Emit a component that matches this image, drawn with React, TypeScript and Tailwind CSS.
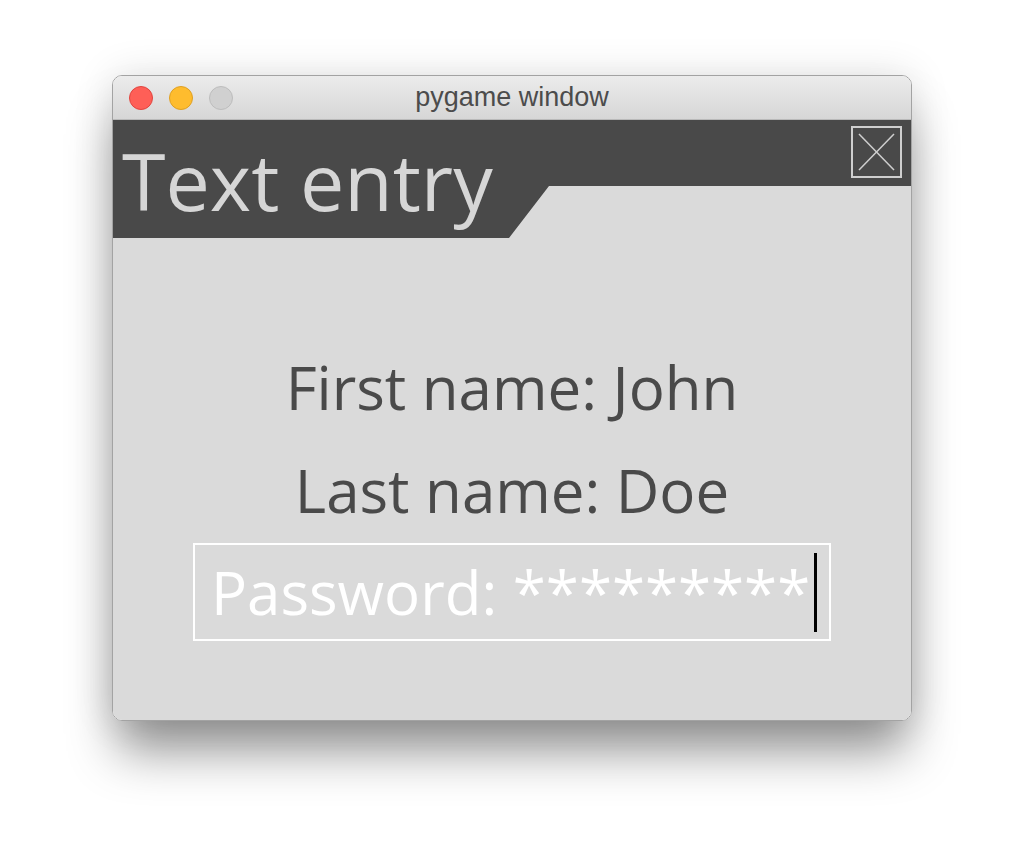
import React from "react";

const openSans = { fontFamily: '"Open Sans", "Noto Sans", sans-serif' };

const TrafficLights: React.FC = () => (
    <div className="flex flex-row gap-[16px] pl-[16px]">
        <div className="w-[24px] h-[24px] rounded-full bg-[#fe5f57] border border-[#e1453f]"></div>
        <div className="w-[24px] h-[24px] rounded-full bg-[#febc2e] border border-[#dfa023]"></div>
        <div className="w-[24px] h-[24px] rounded-full bg-[#d0d0d0] border border-[#bdbdbd]"></div>
    </div>
);

const CloseButton: React.FC = () => (
    <div className="mt-[6px] mr-[9px] w-[51px] h-[52px] border-2 border-[#cfcfcf]">
        <svg width="47" height="48" viewBox="0 0 47 48">
            <line x1="6" y1="6" x2="41" y2="42" stroke="#cfcfcf" strokeWidth="1.5" />
            <line x1="41" y1="6" x2="6" y2="42" stroke="#cfcfcf" strokeWidth="1.5" />
        </svg>
    </div>
);

export default function App() {
    return (
        <div className="w-[1024px] h-[868px] bg-white pt-[75px] pl-[112px]">
            <div className="w-[800px] rounded-[10px] overflow-hidden border border-[#a3a3a3] shadow-[0_36px_50px_-6px_rgba(0,0,0,0.42),0_0_40px_rgba(0,0,0,0.12)]">
                {/* title bar */}
                <div className="h-[44px] flex flex-row items-center bg-gradient-to-b from-[#ececec] to-[#d6d6d6] border-b border-[#b9b9b9]">
                    <TrafficLights />
                    <div
                        className="flex-1 text-center text-[27px] text-[#4c4c4c] pr-[120px]"
                        style={{ fontFamily: '"Liberation Sans", Arial, sans-serif' }}
                    >
                        pygame window
                    </div>
                </div>

                {/* menu surface */}
                <div className="h-[600px] bg-[#dadada] flex flex-col" style={openSans}>
                    <div className="h-[118px] bg-[#494949] flex flex-row items-start justify-between [clip-path:polygon(0_0,100%_0,100%_66px,436px_66px,396px_100%,0_100%)]">
                        <div className="pl-[9px] pt-[21px] text-[79px] leading-[1] text-[#d6d6d6]">Text entry</div>
                        <CloseButton />
                    </div>

                    <div className="flex flex-col items-center">
                        <div className="mt-[119px] text-[60px] leading-[1] text-[#4a4a4a]">First name: John</div>
                        <div className="mt-[43px] text-[60px] leading-[1] text-[#4a4a4a]">Last name: Doe</div>
                        <div className="mt-[23px] w-[638px] h-[98px] border-2 border-white flex flex-row items-center pl-[16px]">
                            <div className="text-[60px] leading-[1] text-white whitespace-nowrap">Password: *********</div>
                            <div className="ml-[4px] w-[3px] h-[79px] bg-black"></div>
                        </div>
                    </div>
                </div>
            </div>
        </div>
    );
}
